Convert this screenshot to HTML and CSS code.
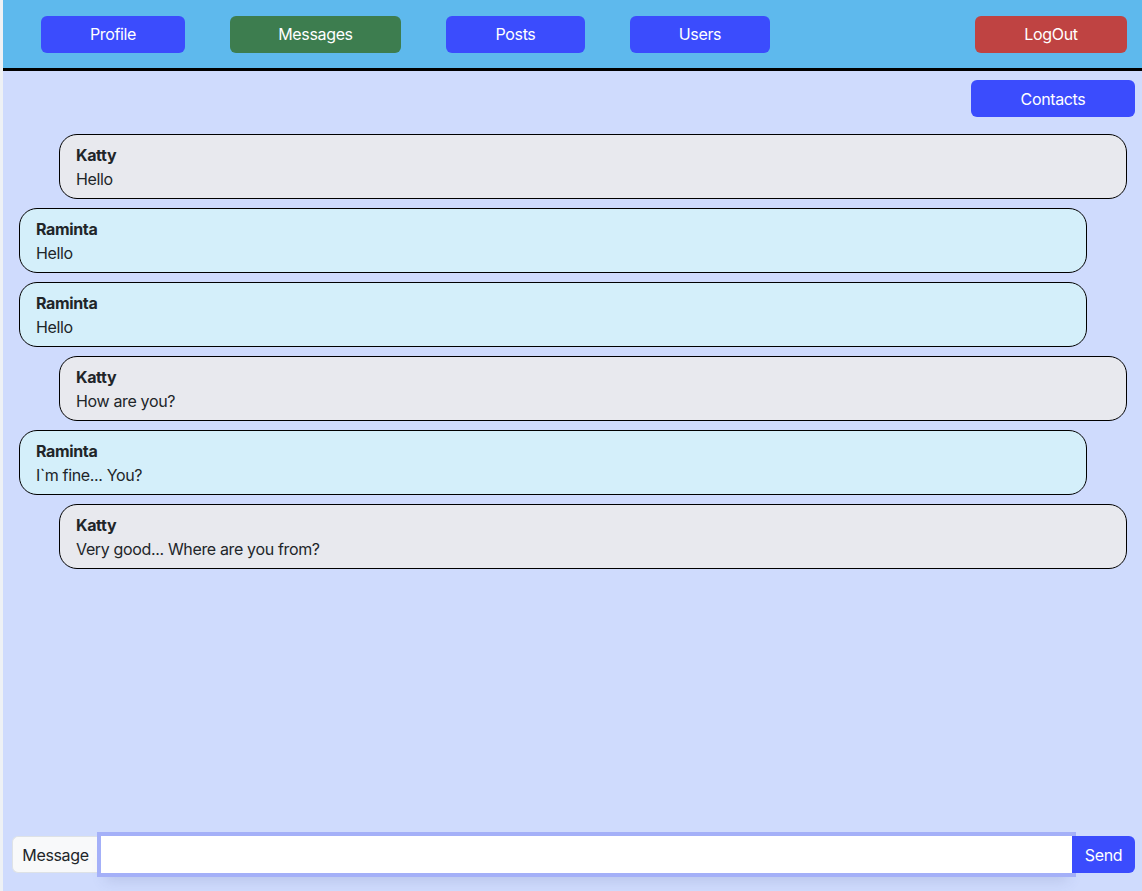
FILE: index.html
```html
<!DOCTYPE html>
<html lang="en">
<head>
<meta charset="utf-8">
<title>Messages</title>
<link rel="stylesheet" href="styles.css">
</head>
<body>
<div class="app">
  <header class="topbar">
    <nav class="nav">
      <button class="btn btn-blue nav-btn btn-profile">Profile</button>
      <button class="btn btn-green nav-btn btn-messages">Messages</button>
      <button class="btn btn-blue nav-btn btn-posts">Posts</button>
      <button class="btn btn-blue nav-btn btn-users">Users</button>
    </nav>
    <button class="btn btn-red nav-btn logout">LogOut</button>
  </header>
  <main class="chat">
    <div class="chat-tools">
      <button class="btn btn-blue contacts">Contacts</button>
    </div>
    <div class="messages">
      <div class="bubble bubble-other">
        <div class="author">Katty</div>
        <div class="text">Hello</div>
      </div>
      <div class="bubble bubble-me">
        <div class="author">Raminta</div>
        <div class="text">Hello</div>
      </div>
      <div class="bubble bubble-me">
        <div class="author">Raminta</div>
        <div class="text">Hello</div>
      </div>
      <div class="bubble bubble-other">
        <div class="author">Katty</div>
        <div class="text">How are you?</div>
      </div>
      <div class="bubble bubble-me">
        <div class="author">Raminta</div>
        <div class="text">I`m fine... You?</div>
      </div>
      <div class="bubble bubble-other">
        <div class="author">Katty</div>
        <div class="text">Very good... Where are you from?</div>
      </div>
    </div>
    <form class="composer">
      <span class="composer-label">Message</span>
      <input class="composer-input" type="text">
      <button class="btn btn-blue composer-send" type="button">Send</button>
    </form>
  </main>
</div>
</body>
</html>
```

FILE: styles.css
```css
* { box-sizing: border-box; }
html, body { height: 100%; }
body {
  margin: 0;
  background: #eef1f5;
  font-family: "Inter", "Liberation Sans", sans-serif;
  font-size: 16px;
  line-height: 24px;
  letter-spacing: -0.35px;
  color: #212529;
}
.app {
  margin-left: 3px;
  height: 100%;
  display: flex;
  flex-direction: column;
  background: #cfdbfd;
}
.topbar {
  height: 71px;
  flex: none;
  background: #5eb9ed;
  border-bottom: 3px solid #000;
  display: flex;
  align-items: center;
  justify-content: space-between;
  padding: 0 15px 0 38px;
}
.nav {
  display: flex;
  gap: 45px;
}
.btn {
  font-family: inherit;
  font-size: 16px;
  line-height: 24px;
  letter-spacing: -0.35px;
  color: #fff;
  border: none;
  border-radius: 6px;
  height: 37px;
  padding: 0 12px;
  cursor: pointer;
}
.btn-blue { background: #3b4cfd; }
.btn-green { background: #3d7d4f; }
.btn-red { background: #bf4342; }
.nav-btn { padding: 0; }
.btn-profile { width: 144px; }
.btn-messages { width: 171px; }
.btn-posts { width: 139px; }
.btn-users { width: 140px; }
.logout { width: 152px; }
.chat {
  flex: 1;
  display: flex;
  flex-direction: column;
  min-height: 0;
}
.chat-tools {
  display: flex;
  justify-content: flex-end;
  padding: 9px 7px 0 0;
}
.contacts { width: 164px; }
.messages {
  flex: 1;
  display: flex;
  flex-direction: column;
  gap: 9px;
  padding-top: 17px;
}
.bubble {
  border: 1px solid #000;
  border-radius: 18px;
  padding: 8px 16px 7px;
}
.bubble-other {
  background: #e8e9ee;
  margin: 0 15px 0 56px;
}
.bubble-me {
  background: #d4effa;
  margin: 0 55px 0 16px;
}
.author { font-weight: 700; }
.composer {
  display: flex;
  align-items: stretch;
  height: 37px;
  margin: 0 7px 18px 9px;
}
.composer-label {
  background: #f8f9fa;
  border: 1px solid #dee2e6;
  border-right: none;
  border-radius: 6px 0 0 6px;
  width: 86px;
  flex: none;
  display: flex;
  align-items: center;
  justify-content: center;
}
.composer-input {
  flex: 1;
  min-width: 0;
  margin-left: 3px;
  border: none;
  background: #fff;
  box-shadow: 0 0 0 4px #a4b0f8, 0 12px 14px -4px rgba(90, 100, 150, 0.18);
  outline: none;
  font: inherit;
  padding: 6px 12px;
}
.composer-send {
  width: 63px;
  padding: 0;
  height: 37px;
  border-radius: 0 6px 6px 0;
  position: relative;
  z-index: 1;
}
```
